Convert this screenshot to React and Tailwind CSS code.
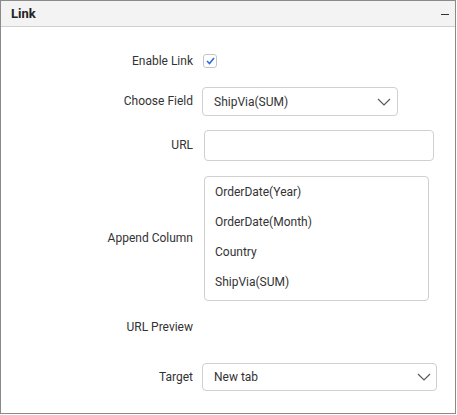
import React from 'react';

function Chevron() {
  return (
    <svg width="14" height="8" viewBox="0 0 14 8" className="shrink-0">
      <polyline points="1,1 7,7 13,1" fill="none" stroke="#5a5a5a" strokeWidth="1.2" />
    </svg>
  );
}

function Row({ label, children, className = '' }) {
  return (
    <div className={`flex items-center ${className}`}>
      <div className="w-[192px] shrink-0 text-right text-[12px] leading-[15px] text-[#333]">{label}</div>
      {children}
    </div>
  );
}

export default function App() {
  const columns = ['OrderDate(Year)', 'OrderDate(Month)', 'Country', 'ShipVia(SUM)'];

  return (
    <div
      className="w-[456px] h-[414px] border border-[#8a8a8a] bg-white flex flex-col"
      style={{ fontFamily: 'Roboto, "Liberation Sans", sans-serif' }}
    >
      <div className="h-[26px] shrink-0 bg-[#f3f3f3] border-b border-[#cfcfcf] flex items-center justify-between pl-[10px] pr-[6px]">
        <span className="text-[13px] font-bold text-[#222]">Link</span>
        <span className="block w-[8px] h-[1.5px] mt-[2px] bg-[#333]" />
      </div>

      <Row label="Enable Link" className="h-[14px] mt-[27px]">
        <div className="ml-[10px] w-[14px] h-[14px] border border-[#c6c6c6] rounded-[3px] flex items-center justify-center">
          <svg width="9" height="8" viewBox="0 0 9 8">
            <polyline points="1,4 3.5,6.5 8,1" fill="none" stroke="#2f6bdc" strokeWidth="1.6" />
          </svg>
        </div>
      </Row>

      <Row label="Choose Field" className="h-[29px] mt-[19px]">
        <div className="ml-[9px] w-[196px] h-[29px] border border-[#d0d0d0] rounded-[4px] flex items-center justify-between pl-[11px] pr-[6px] text-[12px] text-[#333]">
          <span>ShipVia(SUM)</span>
          <Chevron />
        </div>
      </Row>

      <Row label="URL" className="h-[31px] mt-[14px]">
        <div className="ml-[11px] w-[230px] h-[31px] border border-[#d0d0d0] rounded-[4px]" />
      </Row>

      <Row label="Append Column" className="h-[125px] mt-[15px]">
        <div className="ml-[11px] w-[225px] h-[125px] border border-[#d0d0d0] rounded-[4px] flex flex-col">
          {columns.map((c) => (
            <div key={c} className="h-[30px] shrink-0 flex items-center pl-[10px] text-[12px] text-[#333]">
              {c}
            </div>
          ))}
        </div>
      </Row>

      <Row label="URL Preview" className="h-[30px] mt-[11px]" />

      <Row label="Target" className="h-[28px] mt-[21px]">
        <div className="ml-[9px] w-[235px] h-[28px] border border-[#d0d0d0] rounded-[4px] flex items-center justify-between pl-[11px] pr-[5px] text-[12px] text-[#333]">
          <span>New tab</span>
          <Chevron />
        </div>
      </Row>
    </div>
  );
}
